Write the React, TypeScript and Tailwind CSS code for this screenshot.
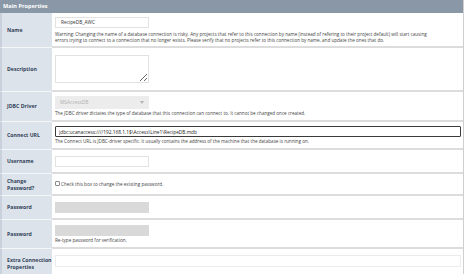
import React from "react";

const font = { fontFamily: '"Open Sans", "Liberation Sans", sans-serif' };

interface RowProps {
  label: React.ReactNode;
  height: string;
  children?: React.ReactNode;
}

const Row: React.FC<RowProps> = ({ label, height, children }) => {
  return (
    <div className={`flex ${height}`}>
      <div className="w-[52px] shrink-0 flex items-center pl-[5px] border-l-2 border-l-[#c9d2dc] bg-[#dce3eb] border-b border-b-[#f4f6f8]">
        <span className="text-[5.2px] leading-[7px] font-bold text-[#34435a]">
          {label}
        </span>
      </div>
      <div className="flex-1 flex flex-col justify-center pl-[3px] pr-[2px] border-b-2 border-b-[#dcdcdc]">
        {children}
      </div>
    </div>
  );
};

const Help: React.FC<{ children: React.ReactNode }> = ({ children }) => (
  <p className="text-[4.6px] leading-[6px] text-[#444] mt-[1px] whitespace-nowrap">
    {children}
  </p>
);

const smallInput =
  "w-[94px] h-[11px] border border-[#e2e2e2] bg-white px-[5px] text-[4.8px] text-[#333] outline-none";

export default function App() {
  return (
    <div className="w-[474px] h-[274px] bg-white overflow-hidden" style={font}>
      <div className="w-[464px] border-r border-r-[#cfcfcf]">
        <div className="h-[13px] bg-[#8a97a6] flex items-center pl-[3px]">
          <span className="text-[5.6px] font-bold text-white">Main Properties</span>
        </div>

        <Row label="Name" height="h-[35px]">
          <input className={smallInput} defaultValue="RecipeDB_AWC" />
          <p className="text-[4.6px] leading-[6px] text-[#444] mt-[3px] whitespace-nowrap">
            Warning: Changing the name of a database connection is risky. Any projects that refer to this connection by name (instead of refering to their project default) will start causing
            <br />
            errors trying to connect to a connection that no longer exists. Please verify that no projects refer to this connection by name, and update the ones that do.
          </p>
        </Row>

        <Row label="Description" height="h-[44px]">
          <textarea className="w-[94px] h-[28px] border border-[#e2e2e2] bg-white outline-none" />
        </Row>

        <Row label="JDBC Driver" height="h-[30px]">
          <div className="w-[94px] h-[13px] bg-[#ececec] flex items-center justify-between px-[5px]">
            <span className="text-[4.8px] text-[#b0b0b0]">MSAccessDB</span>
            <svg width="4" height="3" viewBox="0 0 4 3">
              <path d="M0 0 L4 0 L2 3 Z" fill="#b5b5b5" />
            </svg>
          </div>
          <Help>
            The JDBC driver dictates the type of database that this connection can connect to. It cannot be changed once created.
          </Help>
        </Row>

        <Row label="Connect URL" height="h-[28px]">
          <input
            className="w-[406px] h-[11px] border border-[#3a3a3a] rounded-[1px] bg-white px-[3px] text-[4.8px] text-[#222] outline-none"
            defaultValue="jdbc:ucanaccess:////192.168.1.1$\Access\Line1\RecipeDB.mdb"
          />
          <Help>
            The Connect URL is JDBC-driver specific. It usually contains the address of the machine that the database is running on.
          </Help>
        </Row>

        <Row label="Username" height="h-[24px]">
          <input className={smallInput} />
        </Row>

        <Row
          label={
            <>
              Change
              <br />
              Password?
            </>
          }
          height="h-[22px]"
        >
          <label className="flex items-center gap-[1px]">
            <span className="w-[5px] h-[5px] border border-[#8a8a8a] bg-white rounded-[1px]" />
            <span className="text-[4.6px] text-[#444]">
              Check this box to change the existing password.
            </span>
          </label>
        </Row>

        <Row label="Password" height="h-[24px]">
          <div className="w-[94px] h-[11px] bg-[#d9d9d9]" />
        </Row>

        <Row label="Password" height="h-[29px]">
          <div className="w-[94px] h-[11px] bg-[#d9d9d9]" />
          <Help>Re-type password for verification.</Help>
        </Row>

        <Row
          label={
            <>
              Extra Connection
              <br />
              Properties
            </>
          }
          height="h-[30px]"
        >
          <div className="w-[406px] h-[12px] border border-[#ececec] bg-white mb-[5px]" />
        </Row>
      </div>
    </div>
  );
}
